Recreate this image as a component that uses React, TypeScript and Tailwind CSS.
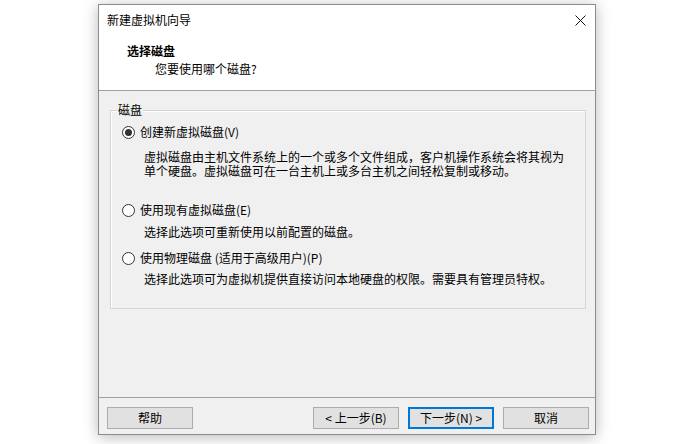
import React from "react";

const font = "font-['Noto_Sans_CJK_SC','Microsoft_YaHei',sans-serif]";

function Radio({ checked }: { checked?: boolean }) {
  return (
    <span className="flex h-[13px] w-[13px] items-center justify-center rounded-full border border-[#333] bg-white">
      {checked && <span className="h-[7px] w-[7px] rounded-full bg-[#333]" />}
    </span>
  );
}

function Btn({ children, primary }: { children: React.ReactNode; primary?: boolean }) {
  return (
    <div
      className={
        "flex h-[22px] w-[86px] items-center justify-center bg-[#e1e1e1] text-[12px] text-black " +
        (primary ? "border-2 border-[#0078d7]" : "border border-[#adadad]")
      }
    >
      {children}
    </div>
  );
}

export default function App() {
  return (
    <div className={"h-[444px] w-[696px] overflow-hidden bg-white pl-[98px] pt-[4px] " + font}>
      <div className="flex h-[431px] w-[498px] flex-col border border-[#8c8c8c] bg-[#f0f0f0] shadow-[0_2px_14px_rgba(0,0,0,0.28)]">
        {/* title bar */}
        <div className="flex h-[30px] items-center bg-white pl-[8px] pr-[8px]">
          <span className="text-[12px] leading-[14px] text-black">新建虚拟机向导</span>
          <svg className="ml-auto mr-[1px]" width="11" height="11" viewBox="0 0 11 11">
            <path d="M0.5 0.5 L10.5 10.5 M10.5 0.5 L0.5 10.5" stroke="#111" strokeWidth="1" />
          </svg>
        </div>
        {/* header */}
        <div className="h-[56px] border-b border-[#a0a0a0] bg-white pl-[28px] pt-[8px]">
          <div className="text-[12px] font-bold leading-[16px] text-black">选择磁盘</div>
          <div className="mt-[3px] pl-[28px] text-[12px] leading-[14px] text-black">您要使用哪个磁盘?</div>
        </div>
        {/* content */}
        <div className="flex-1">
          <div className="relative ml-[11px] mt-[19px] h-[199px] w-[476px] border border-[#d5d5d5] pl-[11px] pt-[13px] shadow-[inset_1px_1px_0_#ffffff] text-[12px] text-black">
            <span className="absolute left-[6px] top-[-8px] bg-[#f0f0f0] px-[1px] leading-[14px]">磁盘</span>
            <div className="flex h-[16px] items-center gap-[5px]">
              <Radio checked />
              <span>创建新虚拟磁盘(V)</span>
            </div>
            <div className="mt-[10px] pl-[22px] leading-[14px]">
              <div>虚拟磁盘由主机文件系统上的一个或多个文件组成，客户机操作系统会将其视为</div>
              <div>单个硬盘。虚拟磁盘可在一台主机上或多台主机之间轻松复制或移动。</div>
            </div>
            <div className="mt-[24px] flex h-[16px] items-center gap-[5px]">
              <Radio />
              <span>使用现有虚拟磁盘(E)</span>
            </div>
            <div className="mt-[7px] pl-[22px] leading-[14px]">选择此选项可重新使用以前配置的磁盘。</div>
            <div className="mt-[11px] flex h-[16px] items-center gap-[5px]">
              <Radio />
              <span>使用物理磁盘 (适用于高级用户)(P)</span>
            </div>
            <div className="mt-[6px] pl-[22px] leading-[14px]">选择此选项可为虚拟机提供直接访问本地硬盘的权限。需要具有管理员特权。</div>
          </div>
        </div>
        {/* footer */}
        <div className="flex h-[37px] items-start border-t border-[#a0a0a0] pl-[8px] pr-[6px] pt-[9px]">
          <Btn>帮助</Btn>
          <div className="ml-auto flex gap-[9px]">
            <Btn>&lt; 上一步(B)</Btn>
            <Btn primary>下一步(N) &gt;</Btn>
            <Btn>取消</Btn>
          </div>
        </div>
      </div>
    </div>
  );
}
